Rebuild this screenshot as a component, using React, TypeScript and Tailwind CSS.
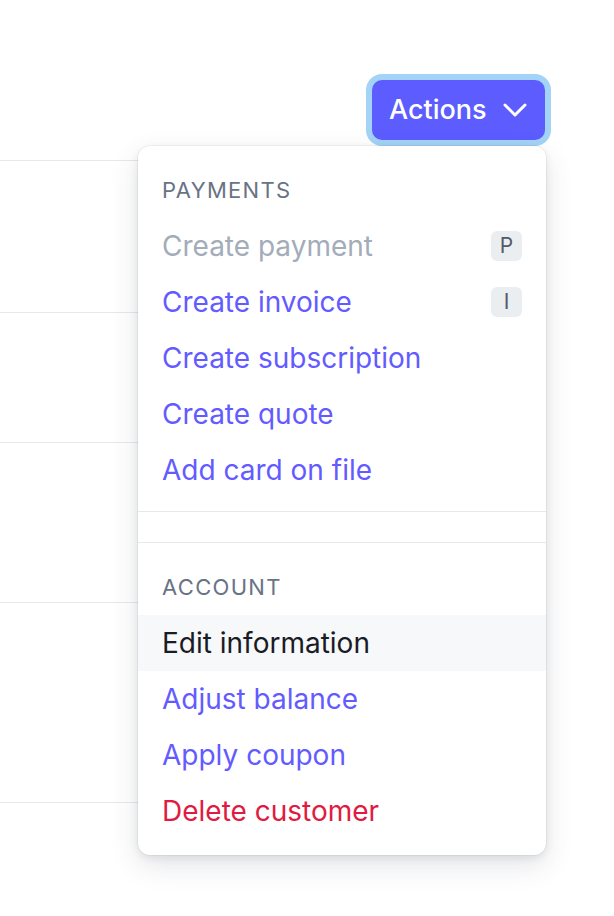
import { Fragment } from 'react';

type MenuItem = {
  label: string;
  tone: 'disabled' | 'link' | 'active' | 'danger';
  shortcut?: string;
};

const paymentItems: MenuItem[] = [
  { label: 'Create payment', tone: 'disabled', shortcut: 'P' },
  { label: 'Create invoice', tone: 'link', shortcut: 'I' },
  { label: 'Create subscription', tone: 'link' },
  { label: 'Create quote', tone: 'link' },
  { label: 'Add card on file', tone: 'link' },
];

const accountItems: MenuItem[] = [
  { label: 'Edit information', tone: 'active' },
  { label: 'Adjust balance', tone: 'link' },
  { label: 'Apply coupon', tone: 'link' },
  { label: 'Delete customer', tone: 'danger' },
];

const toneClass: Record<MenuItem['tone'], string> = {
  disabled: 'text-[#a3acb9]',
  link: 'text-[#635bff]',
  active: 'text-[#1a1b25] bg-[#f6f8fa]',
  danger: 'text-[#df1b41]',
};

// heights of the table rows sitting behind the menu
const rowHeights = [152, 130, 160, 200];

function SectionHeader({ title }: { title: string }) {
  return (
    <div className="flex h-[56px] items-center px-6 text-[22px] uppercase tracking-[0.06em] text-[#687385]">
      {title}
    </div>
  );
}

function Item({ item }: { item: MenuItem }) {
  return (
    <div
      className={`flex h-[56px] items-center justify-between px-6 text-[28px] ${toneClass[item.tone]}`}
    >
      <span>{item.label}</span>
      {item.shortcut && (
        <span className="flex h-[30px] w-[31px] items-center justify-center rounded-md bg-[#ebeef1] text-[21px] text-[#545969]">
          {item.shortcut}
        </span>
      )}
    </div>
  );
}

export default function App() {
  return (
    <div
      className="relative h-[916px] w-[614px] overflow-hidden bg-white"
      style={{ fontFamily: 'Inter, "Noto Sans", sans-serif' }}
    >
      <div className="flex h-[160px] items-start justify-end pr-[69px] pt-[80px]">
        <button className="flex h-[60px] w-[173px] items-center justify-between rounded-[10px] bg-[#5c5cff] pb-[1px] pl-[17px] pr-[18px] text-[27px] font-medium text-white ring-[6px] ring-[#a3d3f7]">
          <span className="mt-[2px]">Actions</span>
          <svg width="24" height="14" viewBox="0 0 24 14" fill="none">
            <path
              d="M2 2l10 10L22 2"
              stroke="white"
              strokeWidth="3"
              strokeLinecap="round"
              strokeLinejoin="round"
            />
          </svg>
        </button>
      </div>

      <div className="w-[546px]">
        {rowHeights.map((h, i) => (
          <Fragment key={i}>
            <div className="border-t border-[#e6e8ec]" style={{ height: h }} />
          </Fragment>
        ))}
        <div className="border-t border-[#e6e8ec]" />
      </div>

      <div className="absolute left-[138px] top-[146px] w-[408px] rounded-[12px] bg-white py-4 shadow-[0_0_0_1px_rgba(0,0,0,0.04),0_10px_28px_rgba(60,66,87,0.14),0_3px_8px_rgba(0,0,0,0.08)]">
        <div className="pb-[13px]">
          <SectionHeader title="Payments" />
          {paymentItems.map((item) => (
            <Item key={item.label} item={item} />
          ))}
        </div>
        <div className="h-[32px] border-y border-[#e6e8ec]" />
        <div className="pt-4">
          <SectionHeader title="Account" />
          {accountItems.map((item) => (
            <Item key={item.label} item={item} />
          ))}
        </div>
      </div>
    </div>
  );
}
